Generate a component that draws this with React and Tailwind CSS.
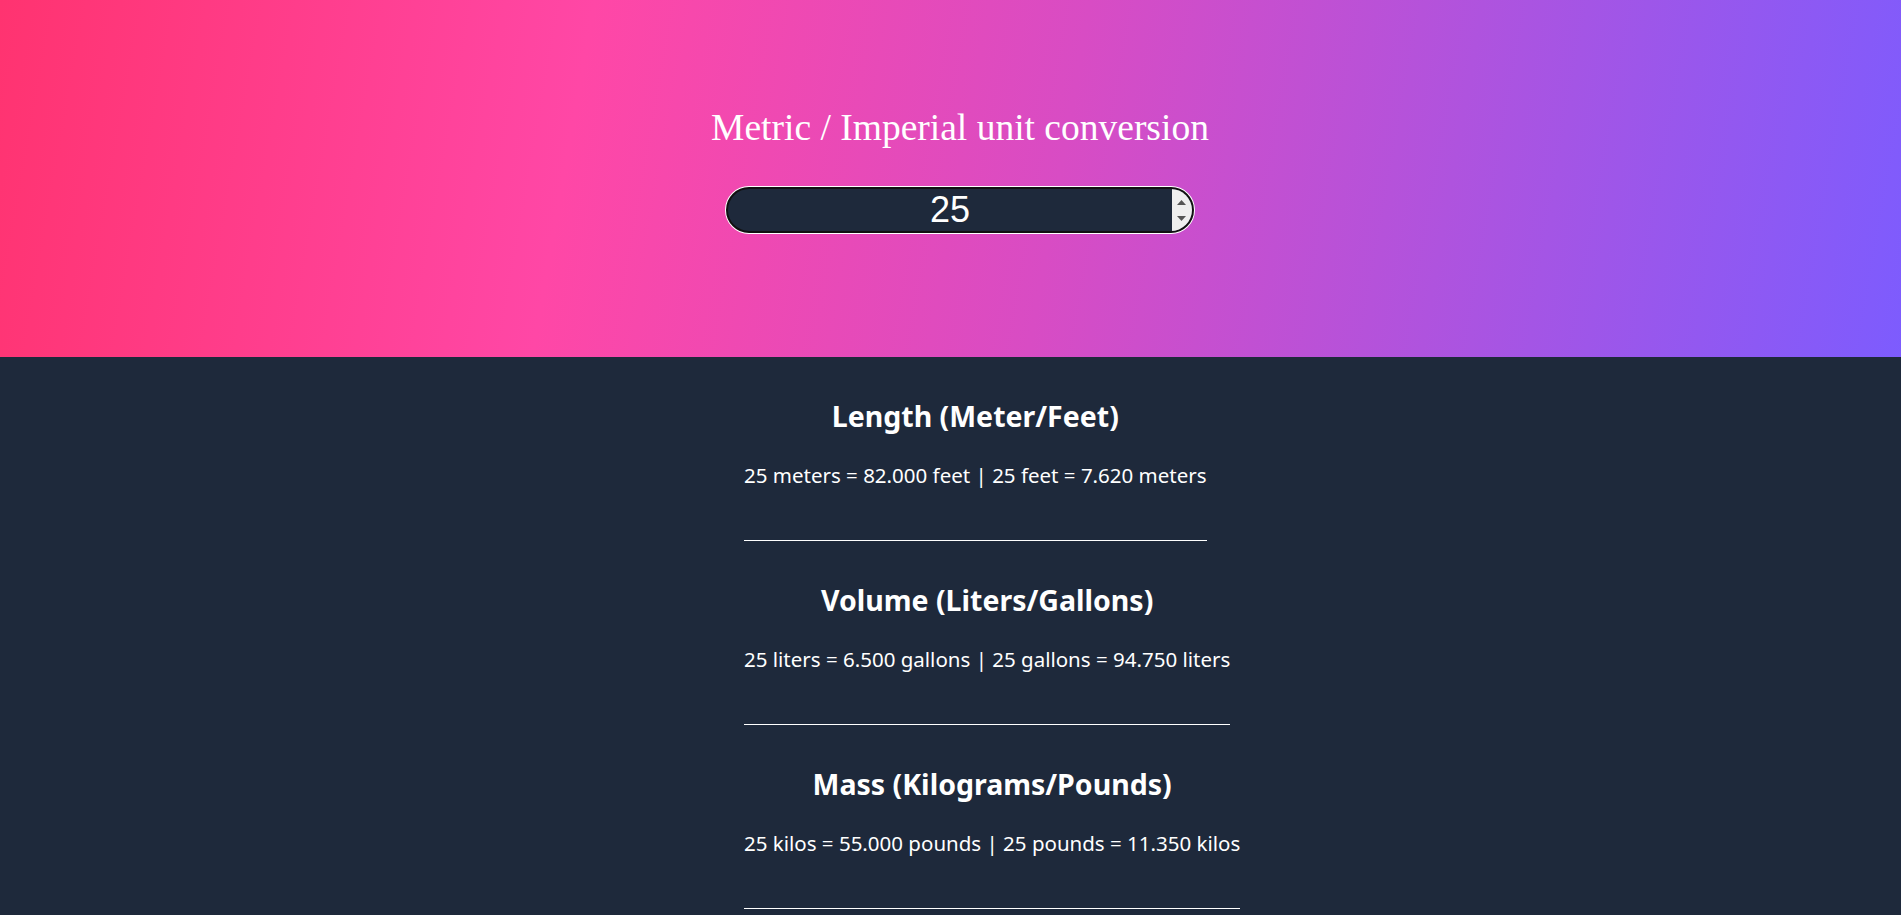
import React, { useState } from 'react';

/**
 * Unit conversion page
 * Gradient header with a number input, followed by three conversion blocks
 */

const conversions = [
  {
    title: 'Length (Meter/Feet)',
    render: (v) =>
      `${v} meters = ${(v * 3.28).toFixed(3)} feet | ${v} feet = ${(v * 0.3048).toFixed(3)} meters`,
  },
  {
    title: 'Volume (Liters/Gallons)',
    render: (v) =>
      `${v} liters = ${(v * 0.26).toFixed(3)} gallons | ${v} gallons = ${(v * 3.79).toFixed(3)} liters`,
  },
  {
    title: 'Mass (Kilograms/Pounds)',
    render: (v) =>
      `${v} kilos = ${(v * 2.2).toFixed(3)} pounds | ${v} pounds = ${(v * 0.454).toFixed(3)} kilos`,
  },
];

const App = () => {
  const [value, setValue] = useState(25);

  return (
    <div className="w-full min-h-screen overflow-hidden bg-[#1e293b]">
      <div className="w-[1920px]">
        {/* Header */}
        <header className="h-[357px] flex flex-col items-center pt-[109px] bg-[linear-gradient(100deg,#ff3370_0%,#ff47a6_30%,#d84cc4_55%,#7b5cff_100%)]">
          <h1 className="text-[37.5px] leading-[38px] text-white font-['Liberation_Serif','Times_New_Roman',serif]">
            Metric / Imperial unit conversion
          </h1>

          {/* Number input */}
          <div className="mt-[40px] w-[468px] h-[46px] flex rounded-full overflow-hidden border-2 border-[#111] bg-[#1e293b] shadow-[0_0_0_1px_#ffffff]">
            <input
              type="text"
              value={value}
              onChange={(e) => setValue(Number(e.target.value) || 0)}
              className="flex-1 min-w-0 bg-transparent text-center text-white text-[36px] leading-none outline-none font-['Liberation_Sans',Arial,sans-serif]"
            />
            <div className="w-[20px] bg-[#efefef] flex flex-col items-start justify-center gap-[11px] pl-[5px]">
              <svg width="9" height="5" viewBox="0 0 9 5">
                <path d="M0 5 L4.5 0 L9 5 Z" fill="#555" />
              </svg>
              <svg width="9" height="5" viewBox="0 0 9 5">
                <path d="M0 0 L4.5 5 L9 0 Z" fill="#555" />
              </svg>
            </div>
          </div>
        </header>

        {/* Conversion results */}
        <main className="w-[432px] mx-auto flex flex-col items-start pt-[41px] pb-10 text-white font-['Comic_Sans_MS','Noto_Sans',sans-serif]">
          {conversions.map((c, i) => (
            <section key={c.title} className={`w-max text-center ${i > 0 ? 'mt-[41px]' : ''}`}>
              <h2 className="text-[28.5px] leading-[36px] font-bold">{c.title}</h2>
              <p className="mt-[27px] text-[20.5px] leading-[28px]">{c.render(value)}</p>
              <hr className="mt-[51px] border-0 h-px bg-white" />
            </section>
          ))}
        </main>
      </div>
    </div>
  );
};

export default App;
